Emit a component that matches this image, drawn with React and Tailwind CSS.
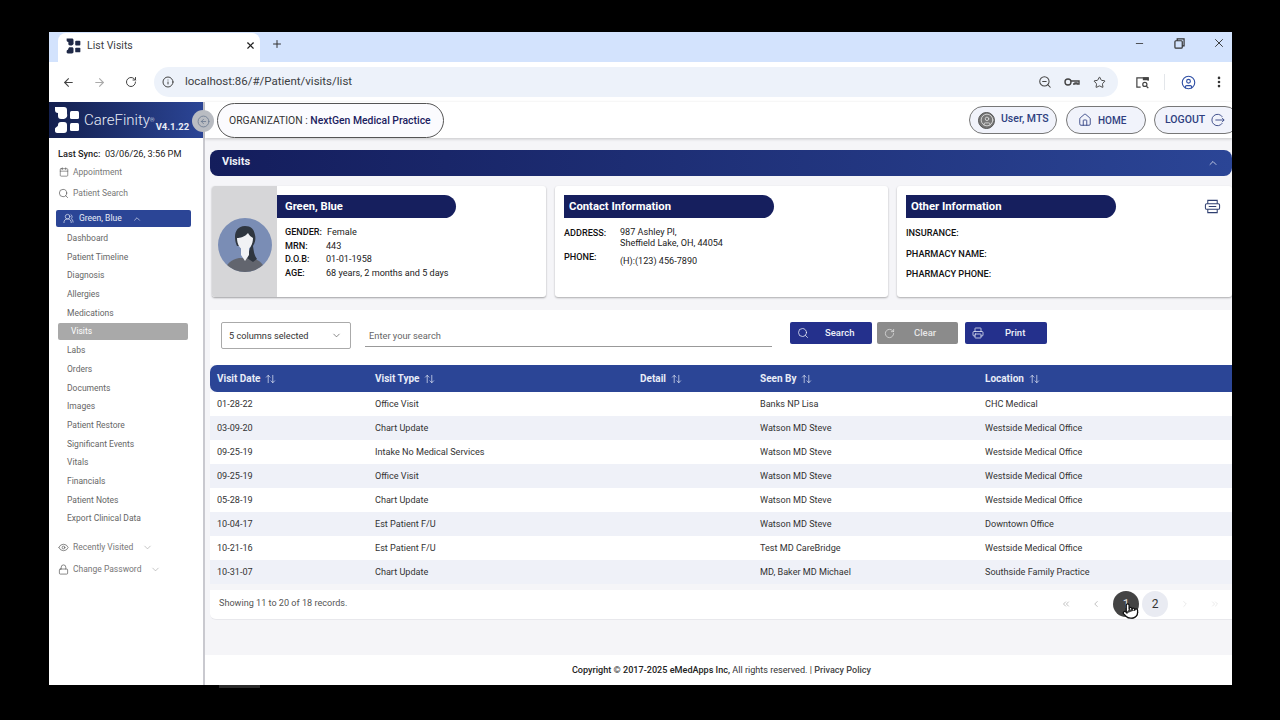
import React from "react";
import { ArrowLeft, ArrowRight, RotateCw, Info, ZoomOut, Star, CircleUser, EllipsisVertical, Minus, X, Plus, Calendar, Search, ChevronUp, ChevronDown, Eye, Lock, Printer, Home, ArrowUpDown, UsersRound, ChevronsLeft, ChevronLeft, ChevronRight, ChevronsRight, RotateCw as Redo, CircleArrowLeft, Pointer } from "lucide-react";

const Logo = ({ className, fill = "#fff" }) => (
  <svg viewBox="0 0 26 28" className={className} fill={fill}>
    <path d="M1 1h9c2 0 3 1 3 3v3c0 2 1 3 -1 5l-2 1H7c-2 0-3-1-3-3V7C2 7 1 6 1 4z" />
    <rect x="16" y="5" width="9" height="8" rx="1.5" />
    <path d="M4 19c0-2 1-3 3-3h3c2 0 3 1 3 3v5c0 2-1 3-3 3H3c-1 0-2-1-2-2v-2c0-2 3-2 3-4z" />
    <rect x="16" y="17" width="9" height="8" rx="1.5" />
  </svg>
);

const Avatar = ({ className }) => (
  <svg viewBox="0 0 54 54" className={className}>
    <defs><clipPath id="av"><circle cx="27" cy="27" r="27" /></clipPath></defs>
    <circle cx="27" cy="27" r="27" fill="#7a8db5" />
    <g clipPath="url(#av)">
      <path d="M7 54c1-9 6-12 14-14h12c8 2 13 5 14 14z" fill="#62656e" />
      <path d="M27 8c-7 0-10 5-10 11 0 4 1 7 2 9h16c2-3 3-7 2-11-1-6-4-9-10-9z" fill="#2f3640" />
      <path d="M34 24c2 6 1 12 5 17l-4 3-6-4z" fill="#2f3640" />
      <path d="M19 20c3 0 8-1 11-5 1 2 3 4 5 5 0 6-3 12-8 12s-8-6-8-12z" fill="#f1f2f5" />
      <path d="M23 30h8v7l-4 6-4-6z" fill="#f1f2f5" />
    </g>
  </svg>
);

const sideItems = ["Dashboard", "Patient Timeline", "Diagnosis", "Allergies", "Medications", "Visits", "Labs", "Orders", "Documents", "Images", "Patient Restore", "Significant Events", "Vitals", "Financials", "Patient Notes", "Export Clinical Data"];

const rows = [
  ["01-28-22", "Office Visit", "Banks NP Lisa", "CHC Medical"],
  ["03-09-20", "Chart Update", "Watson MD Steve", "Westside Medical Office"],
  ["09-25-19", "Intake No Medical Services", "Watson MD Steve", "Westside Medical Office"],
  ["09-25-19", "Office Visit", "Watson MD Steve", "Westside Medical Office"],
  ["05-28-19", "Chart Update", "Watson MD Steve", "Westside Medical Office"],
  ["10-04-17", "Est Patient F/U", "Watson MD Steve", "Downtown Office"],
  ["10-21-16", "Est Patient F/U", "Test MD CareBridge", "Westside Medical Office"],
  ["10-31-07", "Chart Update", "MD, Baker MD Michael", "Southside Family Practice"],
];

const SortHead = ({ label }) => (
  <div className="flex items-center gap-[5px] pl-[7px] text-[10px] font-bold text-[#e8ecf7]">
    <span>{label}</span>
    <ArrowUpDown className="w-[11px] h-[12px]" strokeWidth={1.5} />
  </div>
);

const Info2 = ({ label, value }) => (
  <div className="flex text-[9.1px] text-[#222] h-[13.5px] leading-[13.5px]">
    <span className="w-[41px] font-medium text-[#111]">{label}</span>
    <span>{value}</span>
  </div>
);

export default function App() {
  return (
    <div className="relative w-[1280px] h-[720px] bg-black overflow-hidden pt-[32px] pl-[49px] font-['Roboto',sans-serif]">
      <div className="w-[1183px] h-[653px] bg-white flex flex-col overflow-hidden">
        {/* Tab strip */}
        <div className="h-[30px] bg-[#d3e3fd] flex items-end pl-[9px] shrink-0">
          <div className="w-[202px] h-[29px] bg-white rounded-t-[8px] flex items-center pl-[8px] pr-[4px] pb-[4px]">
            <Logo className="w-[15px] h-[16px]" fill="#1f2947" />
            <span className="ml-[6px] text-[10.5px] text-[#3c4043] flex-1">List Visits</span>
            <X className="w-[11px] h-[11px] text-[#222]" strokeWidth={2.5} />
          </div>
          <Plus className="w-[12px] h-[12px] ml-[11px] mb-[12px] text-[#333]" strokeWidth={2} />
          <div className="flex-1" />
          <div className="flex items-center pr-[6px] mb-[12px] text-[#333]">
            <Minus className="w-[11px] h-[11px]" strokeWidth={1.8} />
            <svg viewBox="0 0 12 12" className="w-[11px] h-[11px] ml-[29px]" fill="none" stroke="currentColor" strokeWidth="1.3"><rect x="1" y="3" width="8" height="8" rx="1" /><path d="M3.5 3V1h7.5v7.5H9" /></svg>
            <X className="w-[14px] h-[14px] ml-[27px]" strokeWidth={1.6} />
          </div>
        </div>
        {/* Address bar */}
        <div className="h-[40px] bg-white flex items-center pl-[13px] pr-[5px] shrink-0 text-[#444]">
          <ArrowLeft className="w-[13px] h-[13px]" strokeWidth={2} />
          <ArrowRight className="w-[13px] h-[13px] ml-[18px] text-[#aaa]" strokeWidth={2} />
          <RotateCw className="w-[12px] h-[12px] ml-[19px]" strokeWidth={2} />
          <div className="w-[964px] h-[30px] ml-[17px] rounded-full bg-[#edf2fa] flex items-center pl-[8px] pr-[12px]">
            <Info className="w-[12px] h-[12px]" strokeWidth={2} />
            <span className="ml-[11px] text-[11.5px] text-[#3c4043] flex-1">localhost:86/#/Patient/visits/list</span>
            <ZoomOut className="w-[14px] h-[14px]" strokeWidth={1.8} />
            <svg viewBox="0 0 16 10" className="w-[16px] h-[10px] ml-[12px]" fill="none" stroke="currentColor" strokeWidth="1.4"><circle cx="4" cy="5" r="3" /><path d="M7 4h8v3h-2v-1h-2v1H9" /></svg>
            <Star className="w-[13px] h-[13px] ml-[13px]" strokeWidth={1.8} />
          </div>
          <svg viewBox="0 0 16 16" className="w-[15px] h-[15px] ml-[17px]" fill="none" stroke="currentColor" strokeWidth="1.3"><path d="M6 13H2V3h12v3" /><path d="M9 3h5v2H9z" fill="currentColor" /><circle cx="10.5" cy="10" r="2.2" /><path d="M12.2 12l2 2" /></svg>
          <div className="w-px h-[16px] bg-[#e3e6ea] ml-[14px]" />
          <CircleUser className="w-[15px] h-[15px] ml-[16px] text-[#2f4fa5]" strokeWidth={1.8} />
          <EllipsisVertical className="w-[14px] h-[14px] ml-[16px] text-[#333]" strokeWidth={2.5} />
        </div>
        {/* App */}
        <div className="flex-1 flex min-h-0 relative">
          <aside className="w-[156px] shrink-0 bg-white border-r-[2px] border-[#c9c9cf] flex flex-col">
            <div className="h-[36px] bg-gradient-to-r from-[#14204f] to-[#2b4596] flex items-center pl-[5px] shrink-0">
              <Logo className="w-[26px] h-[28px]" />
              <span className="ml-[4px] text-[15px] font-light text-[#e8ecf7]">CareFinity<sup className="text-[6px]">®</sup></span>
              <span className="ml-[1px] mt-[15px] text-[9.5px] font-bold text-[#e8ecf7]">V4.1.22</span>
            </div>
            <div className="pl-[9px] mt-[9px] text-[9.2px] leading-[14px] text-[#222]"><b className="font-medium">Last Sync:</b>&nbsp; 03/06/26, 3:56 PM</div>
            <div className="flex items-center pl-[10px] mt-[5px] text-[8.5px] text-[#777] h-[12px]">
              <Calendar className="w-[10px] h-[10px] text-[#555]" strokeWidth={1.5} />
              <span className="ml-[4px]">Appointment</span>
            </div>
            <div className="flex items-center pl-[9px] mt-[9px] text-[8.5px] text-[#777] h-[12px]">
              <Search className="w-[11px] h-[11px] text-[#555]" strokeWidth={1.5} />
              <span className="ml-[4px]">Patient Search</span>
            </div>
            <div className="ml-[7px] mt-[11px] w-[135px] h-[17px] rounded-[2px] bg-[#2b4596] flex items-center pl-[7px] text-[8.5px] text-[#e8ecf7]">
              <UsersRound className="w-[11px] h-[11px]" strokeWidth={1.5} />
              <span className="ml-[5px]">Green, Blue</span>
              <ChevronUp className="w-[10px] h-[10px] ml-[10px]" strokeWidth={1.5} />
            </div>
            <div className="mt-[2px] flex flex-col">
              {sideItems.map((t) => t === "Visits" ? (
                <div key={t} className="ml-[9px] w-[130px] h-[18.7px] flex items-center">
                  <div className="w-full h-[17px] bg-[#a9a9a9] rounded-[2px] pl-[13px] text-[8.5px] leading-[17px] text-white">{t}</div>
                </div>
              ) : (
                <div key={t} className="pl-[18px] h-[18.7px] text-[8.5px] leading-[18.7px] text-[#666]">{t}</div>
              ))}
            </div>
            <div className="flex items-center pl-[9px] mt-[13px] text-[8.5px] text-[#777] h-[12px]">
              <Eye className="w-[11px] h-[11px] text-[#555]" strokeWidth={1.5} />
              <span className="ml-[4px]">Recently Visited</span>
              <ChevronDown className="w-[11px] h-[11px] ml-[9px] text-[#aaa]" strokeWidth={1.5} />
            </div>
            <div className="flex items-center pl-[9px] mt-[10px] text-[8.5px] text-[#777] h-[12px]">
              <Lock className="w-[11px] h-[11px] text-[#555]" strokeWidth={1.5} />
              <span className="ml-[4px]">Change Password</span>
              <ChevronDown className="w-[11px] h-[11px] ml-[9px] text-[#aaa]" strokeWidth={1.5} />
            </div>
          </aside>

          <div className="absolute left-[143px] top-[8px] w-[22px] h-[22px] rounded-full bg-[#b9bcc2] flex items-center justify-center">
            <CircleArrowLeft className="w-[13px] h-[13px] text-[#6b7a90]" strokeWidth={1.5} />
          </div>

          <main className="flex-1 min-w-0 bg-[#f5f5f8] flex flex-col">
            {/* header */}
            <div className="h-[36px] bg-white shadow-[0_1px_3px_rgba(0,0,0,0.2)] flex items-center pl-[12px] shrink-0 overflow-hidden">
              <div className="w-[227px] h-[35px] rounded-full border border-[#555] bg-[#fbfbfe] flex items-center pl-[11px] pt-[1px] text-[10.4px] text-[#333]">
                ORGANIZATION :&nbsp;<b className="font-medium text-[#1b2160]">NextGen Medical Practice</b>
              </div>
              <div className="flex-1" />
              <div className="w-[88px] h-[28px] rounded-full border border-[#777] bg-[#f1f3fb] flex items-center pl-[8px] text-[10.5px] font-medium text-[#2f3f80]">
                <span className="w-[17px] h-[17px] rounded-full bg-[#777] border border-[#555] flex items-center justify-center"><CircleUser className="w-[14px] h-[14px] text-[#ddd]" strokeWidth={1.5} /></span>
                <span className="ml-[6px] -mt-[2px]">User, MTS</span>
              </div>
              <div className="w-[80px] h-[28px] ml-[9px] rounded-full border border-[#777] bg-[#f1f3fb] flex items-center pl-[11px] text-[10px] font-medium text-[#2f3f80]">
                <Home className="w-[14px] h-[14px]" strokeWidth={1.5} />
                <span className="ml-[6px]">HOME</span>
              </div>
              <div className="w-[85px] -mr-[7px] h-[28px] ml-[8px] shrink-0 rounded-full border border-[#777] bg-[#f1f3fb] flex items-center pl-[10px] text-[10.5px] font-medium text-[#2f3f80]">
                <span>LOGOUT</span>
                <svg viewBox="0 0 16 16" className="w-[14px] h-[14px] ml-[6px]" fill="none" stroke="currentColor" strokeWidth="1"><path d="M13 4.5a6.5 6.5 0 1 0 0 7" /><path d="M5 8h10M12.5 5.5L15 8l-2.5 2.5" /></svg>
              </div>
            </div>

            <div className="pl-[5px] flex flex-col flex-1 min-h-0">
              {/* Visits bar */}
              <div className="mt-[12px] h-[26px] rounded-[8px] bg-gradient-to-r from-[#141d5c] to-[#2b4596] flex items-center pl-[12px] pr-[13px] text-[11px] font-bold text-[#eef0f8] shrink-0">
                <span className="flex-1 -mt-[2px]">Visits</span>
                <ChevronUp className="w-[12px] h-[12px]" strokeWidth={1.5} />
              </div>
              {/* Cards */}
              <div className="mt-[10px] h-[111px] flex gap-[9px] pl-[2px] shrink-0">
                <div className="w-[334px] bg-white rounded-[3px] shadow-[0_1px_2px_rgba(0,0,0,0.35)] flex overflow-hidden">
                  <div className="w-[65px] bg-[#d6d6d8] flex items-center justify-center pl-[1px] pt-[6px]"><Avatar className="w-[54px] h-[54px]" /></div>
                  <div className="flex-1 pt-[9px]">
                    <div className="w-[179px] h-[23px] rounded-r-[12px] bg-[#161f5e] pl-[8px] pt-[1px] flex items-center text-[11.2px] font-bold text-white">Green, Blue</div>
                    <div className="mt-[8px] pl-[8px] flex flex-col">
                      <Info2 label="GENDER:" value={<span className="ml-[1px]">Female</span>} />
                      <Info2 label="MRN:" value="443" />
                      <Info2 label="D.O.B:" value="01-01-1958" />
                      <Info2 label="AGE:" value="68 years, 2 months and 5 days" />
                    </div>
                  </div>
                </div>
                <div className="w-[333px] bg-white rounded-[3px] shadow-[0_1px_2px_rgba(0,0,0,0.3)] pt-[9px] pl-[9px]">
                  <div className="w-[210px] h-[23px] rounded-r-[12px] bg-[#161f5e] pl-[5px] pt-[1px] flex items-center text-[11.3px] font-bold text-white">Contact Information</div>
                  <div className="mt-[9px] flex text-[9.1px] leading-[11px]">
                    <span className="w-[56px] font-medium text-[#111] pt-[1px]">ADDRESS:</span>
                    <span className="text-[#222]">987 Ashley Pl,<br />Sheffield Lake, OH, 44054</span>
                  </div>
                  <div className="mt-[3px] flex text-[9.1px] leading-[11px]">
                    <span className="w-[56px] font-medium text-[#111]">PHONE:</span>
                    <span className="text-[#222] mt-[4px]">(H):(123) 456-7890</span>
                  </div>
                </div>
                <div className="flex-1 bg-white rounded-[3px] shadow-[0_1px_2px_rgba(0,0,0,0.3)] pt-[9px] pl-[9px] pr-[11px]">
                  <div className="flex items-center justify-between">
                    <div className="w-[210px] h-[23px] rounded-r-[12px] bg-[#161f5e] pl-[5px] pt-[1px] flex items-center text-[11.3px] font-bold text-white">Other Information</div>
                    <svg viewBox="0 0 18 18" className="w-[17px] h-[17px] text-[#2f3f70]" fill="none" stroke="currentColor" strokeWidth="1.1"><path d="M4 6V2.5h10V6" /><rect x="1.5" y="6" width="15" height="6" rx="1.5" /><path d="M4 12v3.5h10V12" /><path d="M5 9h8" /></svg>
                  </div>
                  <div className="mt-[9px] flex flex-col gap-[9.5px] text-[9.2px] leading-[11px] font-medium text-[#111]">
                    <span>INSURANCE:</span>
                    <span>PHARMACY NAME:</span>
                    <span>PHARMACY PHONE:</span>
                  </div>
                </div>
              </div>
              {/* Toolbar */}
              <div className="mt-[13px] h-[55px] bg-white flex items-start shrink-0 pl-[11px]">
                <div className="mt-[12px] w-[130px] h-[27px] rounded-[2px] border border-[#aaa] flex items-center pl-[7px] pr-[8px] text-[9.2px] text-[#333]">
                  <span className="flex-1">5 columns selected</span>
                  <ChevronDown className="w-[11px] h-[11px] text-[#555]" strokeWidth={1.5} />
                </div>
                <div className="mt-[12px] ml-[14px] w-[407px] h-[25px] border-b border-[#999] flex items-center pl-[4px] pt-[3px] text-[9.3px] text-[#666]">Enter your search</div>
                <div className="mt-[12px] ml-[18px] w-[82px] h-[22px] rounded-[2px] bg-[#24308c] flex items-center pl-[7px] text-[9.5px] font-medium text-[#eef0f8]">
                  <Search className="w-[12px] h-[12px]" strokeWidth={1.5} />
                  <span className="ml-[16px]">Search</span>
                </div>
                <div className="mt-[12px] ml-[5px] w-[81px] h-[22px] rounded-[2px] bg-[#8b8b8b] flex items-center pl-[7px] text-[9.5px] font-medium text-[#e6e6e6]">
                  <Redo className="w-[11px] h-[11px]" strokeWidth={1.5} />
                  <span className="ml-[19px]">Clear</span>
                </div>
                <div className="mt-[12px] ml-[7px] w-[82px] h-[22px] rounded-[2px] bg-[#24308c] flex items-center pl-[7px] text-[9.5px] font-medium text-[#eef0f8]">
                  <Printer className="w-[12px] h-[12px]" strokeWidth={1.5} />
                  <span className="ml-[21px]">Print</span>
                </div>
              </div>
              {/* Table */}
              <div className="h-[27px] rounded-l-[7px] bg-[#2b4596] grid grid-cols-[158px_265px_120px_225px_1fr] items-center shrink-0">
                <SortHead label="Visit Date" />
                <SortHead label="Visit Type" />
                <SortHead label="Detail" />
                <SortHead label="Seen By" />
                <SortHead label="Location" />
              </div>
              <div className="flex flex-col shrink-0">
                {rows.map((r, i) => (
                  <div key={i} className={`h-[24px] pt-[2px] grid grid-cols-[158px_265px_120px_225px_1fr] items-center text-[9.1px] text-[#333] ${i % 2 ? "bg-[#eff1f8]" : "bg-white"}`}>
                    <span className="pl-[7px]">{r[0]}</span>
                    <span className="pl-[7px]">{r[1]}</span>
                    <span />
                    <span className="pl-[7px]">{r[2]}</span>
                    <span className="pl-[7px]">{r[3]}</span>
                  </div>
                ))}
              </div>
              {/* Pagination */}
              <div className="mt-[6px] h-[30px] bg-white rounded-bl-[6px] border-b border-[#e8e8ec] flex items-center pl-[9px] pr-[4px] pb-[2px] shrink-0 relative">
                <span className="flex-1 text-[9.1px] text-[#555]">Showing 11 to 20 of 18 records.</span>
                <div className="flex items-center text-[#999]">
                  <span className="w-[30px] flex justify-center"><ChevronsLeft className="w-[10px] h-[10px]" strokeWidth={1.5} /></span>
                  <span className="w-[30px] flex justify-center"><ChevronLeft className="w-[10px] h-[10px]" strokeWidth={1.5} /></span>
                  <span className="mx-[2px] w-[26px] h-[26px] rounded-full bg-[#444] flex items-center justify-center text-[12px] text-[#ddd]">1</span>
                  <span className="ml-[1px] w-[26px] h-[26px] rounded-full bg-[#e9ebf2] flex items-center justify-center text-[12px] text-[#333]">2</span>
                  <span className="w-[34px] flex justify-center"><ChevronRight className="w-[10px] h-[10px] text-[#ddd]" strokeWidth={1.5} /></span>
                  <span className="w-[26px] flex justify-center"><ChevronsRight className="w-[10px] h-[10px] text-[#ddd]" strokeWidth={1.5} /></span>
                </div>
                <Pointer className="absolute right-[93px] top-[11px] w-[17px] h-[20px] text-[#111] fill-white" strokeWidth={1.8} />
              </div>
              <div className="flex-1" />
            </div>
            {/* Footer */}
            <div className="h-[30px] bg-white flex items-center justify-center pl-[6px] pt-[2px] text-[9.1px] text-[#333] shrink-0">
              <b className="font-medium text-[#222]">Copyright © 2017-2025 eMedApps Inc,</b>&nbsp;All rights reserved. |&nbsp;<b className="font-medium text-[#444]">Privacy Policy</b>
            </div>
          </main>
        </div>
      </div>
      <div className="absolute left-[219px] top-[685px] w-[41px] h-[3px] bg-[#2a2a2a]" />
    </div>
  );
}
